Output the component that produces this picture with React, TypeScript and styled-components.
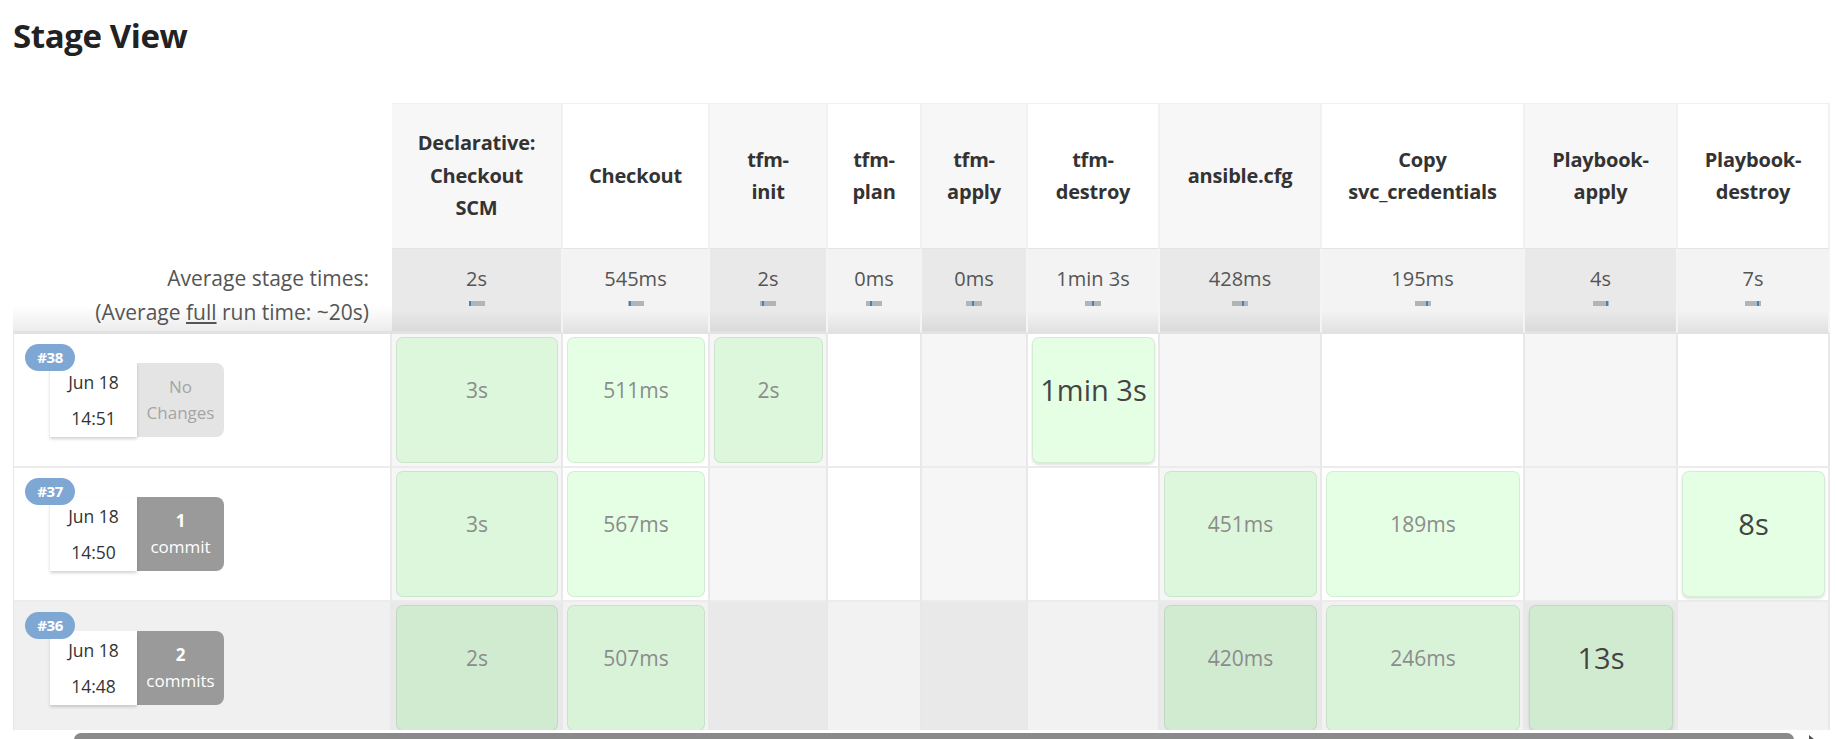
import React from 'react';
import styled, { createGlobalStyle } from 'styled-components';

const GlobalStyle = createGlobalStyle`
  html, body {
    margin: 0;
    padding: 0;
    background: #ffffff;
    overflow: hidden;
  }
  body {
    font-family: "Open Sans", "Noto Sans", sans-serif;
    color: #333333;
  }
`;

type Stage = { lines: string[]; avg: string; width: number; tick: number };

const stages: Stage[] = [
  { lines: ['Declarative:', 'Checkout', 'SCM'], avg: '2s', width: 171, tick: 0 },
  { lines: ['Checkout'], avg: '545ms', width: 147, tick: 0.05 },
  { lines: ['tfm-', 'init'], avg: '2s', width: 118, tick: 0.15 },
  { lines: ['tfm-', 'plan'], avg: '0ms', width: 94, tick: 0.3 },
  { lines: ['tfm-', 'apply'], avg: '0ms', width: 106, tick: 0.4 },
  { lines: ['tfm-', 'destroy'], avg: '1min 3s', width: 132, tick: 0.5 },
  { lines: ['ansible.cfg'], avg: '428ms', width: 162, tick: 0.7 },
  { lines: ['Copy', 'svc_credentials'], avg: '195ms', width: 203, tick: 0.8 },
  { lines: ['Playbook-', 'apply'], avg: '4s', width: 153, tick: 0.9 },
  { lines: ['Playbook-', 'destroy'], avg: '7s', width: 152, tick: 0.88 },
];

type Cell = { time: string; big?: boolean } | null;
type Run = {
  id: string;
  date: string;
  time: string;
  changes: string[];
  hasCommits: boolean;
  shade: boolean;
  cells: Cell[];
};

const runs: Run[] = [
  {
    id: '#38',
    date: 'Jun 18',
    time: '14:51',
    changes: ['No', 'Changes'],
    hasCommits: false,
    shade: false,
    cells: [
      { time: '3s' },
      { time: '511ms' },
      { time: '2s' },
      null,
      null,
      { time: '1min 3s', big: true },
      null,
      null,
      null,
      null,
    ],
  },
  {
    id: '#37',
    date: 'Jun 18',
    time: '14:50',
    changes: ['1', 'commit'],
    hasCommits: true,
    shade: false,
    cells: [
      { time: '3s' },
      { time: '567ms' },
      null,
      null,
      null,
      null,
      { time: '451ms' },
      { time: '189ms' },
      null,
      { time: '8s', big: true },
    ],
  },
  {
    id: '#36',
    date: 'Jun 18',
    time: '14:48',
    changes: ['2', 'commits'],
    hasCommits: true,
    shade: true,
    cells: [
      { time: '2s' },
      { time: '507ms' },
      null,
      null,
      null,
      null,
      { time: '420ms' },
      { time: '246ms' },
      { time: '13s', big: true },
      null,
    ],
  },
];

const columnTemplate = ['379px', ...stages.map((s) => `${s.width}px`)].join(' ');

const Page = styled.div`
  height: 739px;
  padding-left: 13px;
  box-sizing: border-box;
  overflow: hidden;
`;

const Title = styled.h2`
  margin: 0;
  height: 103px;
  padding-top: 14px;
  box-sizing: border-box;
  font-size: 33px;
  line-height: 44px;
  font-weight: 700;
  color: #222222;
  letter-spacing: -0.4px;
`;

const TableClip = styled.div`
  height: 627px;
  overflow: hidden;
`;

const Row = styled.div<{ $cols: string }>`
  display: grid;
  grid-template-columns: ${(p) => p.$cols};
`;

const HeadBlank = styled.div`
  background: #ffffff;
`;

const StageHead = styled.div<{ $odd: boolean }>`
  box-sizing: border-box;
  height: 145px;
  display: flex;
  align-items: center;
  justify-content: center;
  text-align: center;
  padding: 0 4px;
  font-size: 20px;
  font-weight: 700;
  line-height: 32.5px;
  color: #333333;
  letter-spacing: -0.2px;
  background: ${(p) => (p.$odd ? '#f7f7f7' : '#ffffff')};
  border-top: 1px solid #efefef;
  border-right: 2px solid #f1f1f1;
`;

const AvgLabel = styled.div`
  box-sizing: border-box;
  height: 86px;
  padding: 13px 23px 0 0;
  text-align: right;
  font-size: 21px;
  line-height: 34px;
  color: #555555;
  white-space: nowrap;
  background: linear-gradient(#ffffff 0%, #ffffff 70%, #ececec 100%);
  border-bottom: 3px solid #e2e2e2;
`;

const Underlined = styled.span`
  text-decoration: underline;
`;

const AvgCell = styled.div<{ $odd: boolean }>`
  box-sizing: border-box;
  height: 86px;
  padding-top: 13px;
  display: flex;
  flex-direction: column;
  align-items: center;
  background: ${(p) =>
    p.$odd
      ? 'linear-gradient(#e9e9e9 0%, #e9e9e9 75%, #dadada 100%)'
      : 'linear-gradient(#f3f3f3 0%, #f3f3f3 75%, #e2e2e2 100%)'};
  border-top: 1px solid #e4e4e4;
  border-right: 2px solid #f4f4f4;
  border-bottom: 3px solid #e2e2e2;
`;

const AvgValue = styled.span`
  font-size: 20px;
  line-height: 34px;
  color: #555555;
  white-space: nowrap;
`;

const MiniBar = styled.div`
  position: relative;
  margin-top: 5px;
  width: 16px;
  height: 5px;
  background: #b4b4b4;
`;

const MiniTick = styled.div`
  position: absolute;
  top: 0;
  width: 2px;
  height: 5px;
  background: #3f7fd6;
`;

const RunCell = styled.div<{ $shade: boolean }>`
  position: relative;
  box-sizing: border-box;
  height: 134px;
  background: ${(p) => (p.$shade ? '#f0f0f0' : '#ffffff')};
  border-left: 1px solid #e6e6e6;
  border-right: 2px solid #e9e9e9;
  border-bottom: 2px solid #ececec;
  padding: 29px 0 0 36px;
`;

const Badge = styled.span`
  position: absolute;
  top: 10px;
  left: 11px;
  z-index: 2;
  width: 50px;
  height: 27px;
  border-radius: 14px;
  background: #7fa7d4;
  color: #ffffff;
  font-size: 15px;
  font-weight: 700;
  line-height: 27px;
  text-align: center;
  letter-spacing: -0.4px;
`;

const RunInfo = styled.div`
  display: flex;
  width: 174px;
  height: 74px;
`;

const DateBox = styled.div`
  width: 87px;
  height: 74px;
  display: flex;
  flex-direction: column;
  justify-content: center;
  align-items: center;
  background: #ffffff;
  box-shadow: 0 2px 3px rgba(0, 0, 0, 0.18);
  font-size: 17.5px;
  line-height: 36px;
  color: #333333;
  position: relative;
  z-index: 1;
`;

const ChangesBox = styled.div<{ $commits: boolean }>`
  width: 87px;
  height: 74px;
  display: flex;
  flex-direction: column;
  justify-content: center;
  align-items: center;
  border-radius: 0 8px 8px 0;
  background: ${(p) => (p.$commits ? '#9a9a9a' : '#e4e4e4')};
  color: ${(p) => (p.$commits ? '#ffffff' : '#a4a4a4')};
  font-size: 17px;
  line-height: 26px;
`;

const CommitCount = styled.span`
  font-weight: 700;
`;

const StageCell = styled.div<{ $odd: boolean; $shade: boolean }>`
  box-sizing: border-box;
  height: 134px;
  padding: 3px 3px 3px 4px;
  background: ${(p) =>
    p.$shade ? (p.$odd ? '#e9e9e9' : '#f2f2f2') : p.$odd ? '#f6f6f6' : '#ffffff'};
  border-right: 2px solid #e8e8e8;
  border-bottom: 2px solid #ececec;
`;

const StageBox = styled.div<{ $big: boolean }>`
  box-sizing: border-box;
  height: 100%;
  padding-top: 39px;
  border: 1px solid rgba(0, 0, 0, 0.08);
  border-radius: 7px;
  background: rgba(0, 255, 0, 0.1);
  box-shadow: ${(p) => (p.$big ? '0 2px 3px rgba(0, 0, 0, 0.12)' : 'none')};
  text-align: center;
`;

const Duration = styled.span<{ $big: boolean }>`
  display: block;
  line-height: 26px;
  white-space: nowrap;
  font-size: ${(p) => (p.$big ? '29px' : '21px')};
  color: ${(p) => (p.$big ? '#444444' : '#8c8c8c')};
`;

const ScrollArea = styled.div`
  position: relative;
  margin-top: 3px;
  height: 9px;
`;

const ScrollThumb = styled.div`
  margin-left: 61px;
  width: 1720px;
  height: 14px;
  border-radius: 7px 7px 0 0;
  background: #8a8a8a;
`;

const ScrollArrow = styled.div`
  position: absolute;
  left: 1796px;
  top: 2px;
  width: 0;
  height: 0;
  border-top: 5px solid transparent;
  border-bottom: 5px solid transparent;
  border-left: 6px solid #505050;
`;

export default function App() {
  return (
    <>
      <GlobalStyle />
      <Page>
        <Title>Stage View</Title>
        <TableClip>
          <Row $cols={columnTemplate}>
            <HeadBlank />
            {stages.map((s, i) => (
              <StageHead key={i} $odd={i % 2 === 0}>
                <span>
                  {s.lines.map((l, j) => (
                    <React.Fragment key={j}>
                      {j > 0 && <br />}
                      {l}
                    </React.Fragment>
                  ))}
                </span>
              </StageHead>
            ))}
          </Row>
          <Row $cols={columnTemplate}>
            <AvgLabel>
              Average stage times:
              <br />
              (Average <Underlined>full</Underlined> run time: ~20s)
            </AvgLabel>
            {stages.map((s, i) => (
              <AvgCell key={i} $odd={i % 2 === 0}>
                <AvgValue>{s.avg}</AvgValue>
                <MiniBar>
                  <MiniTick style={{ left: `${Math.round(s.tick * 14)}px` }} />
                </MiniBar>
              </AvgCell>
            ))}
          </Row>
          {runs.map((r) => (
            <Row key={r.id} $cols={columnTemplate}>
              <RunCell $shade={r.shade}>
                <Badge>{r.id}</Badge>
                <RunInfo>
                  <DateBox>
                    <span>{r.date}</span>
                    <span>{r.time}</span>
                  </DateBox>
                  <ChangesBox $commits={r.hasCommits}>
                    {r.hasCommits ? (
                      <CommitCount>{r.changes[0]}</CommitCount>
                    ) : (
                      <span>{r.changes[0]}</span>
                    )}
                    <span>{r.changes[1]}</span>
                  </ChangesBox>
                </RunInfo>
              </RunCell>
              {r.cells.map((c, i) => (
                <StageCell key={i} $odd={i % 2 === 0} $shade={r.shade}>
                  {c && (
                    <StageBox $big={!!c.big}>
                      <Duration $big={!!c.big}>{c.time}</Duration>
                    </StageBox>
                  )}
                </StageCell>
              ))}
            </Row>
          ))}
        </TableClip>
        <ScrollArea>
          <ScrollThumb />
          <ScrollArrow />
        </ScrollArea>
      </Page>
    </>
  );
}
